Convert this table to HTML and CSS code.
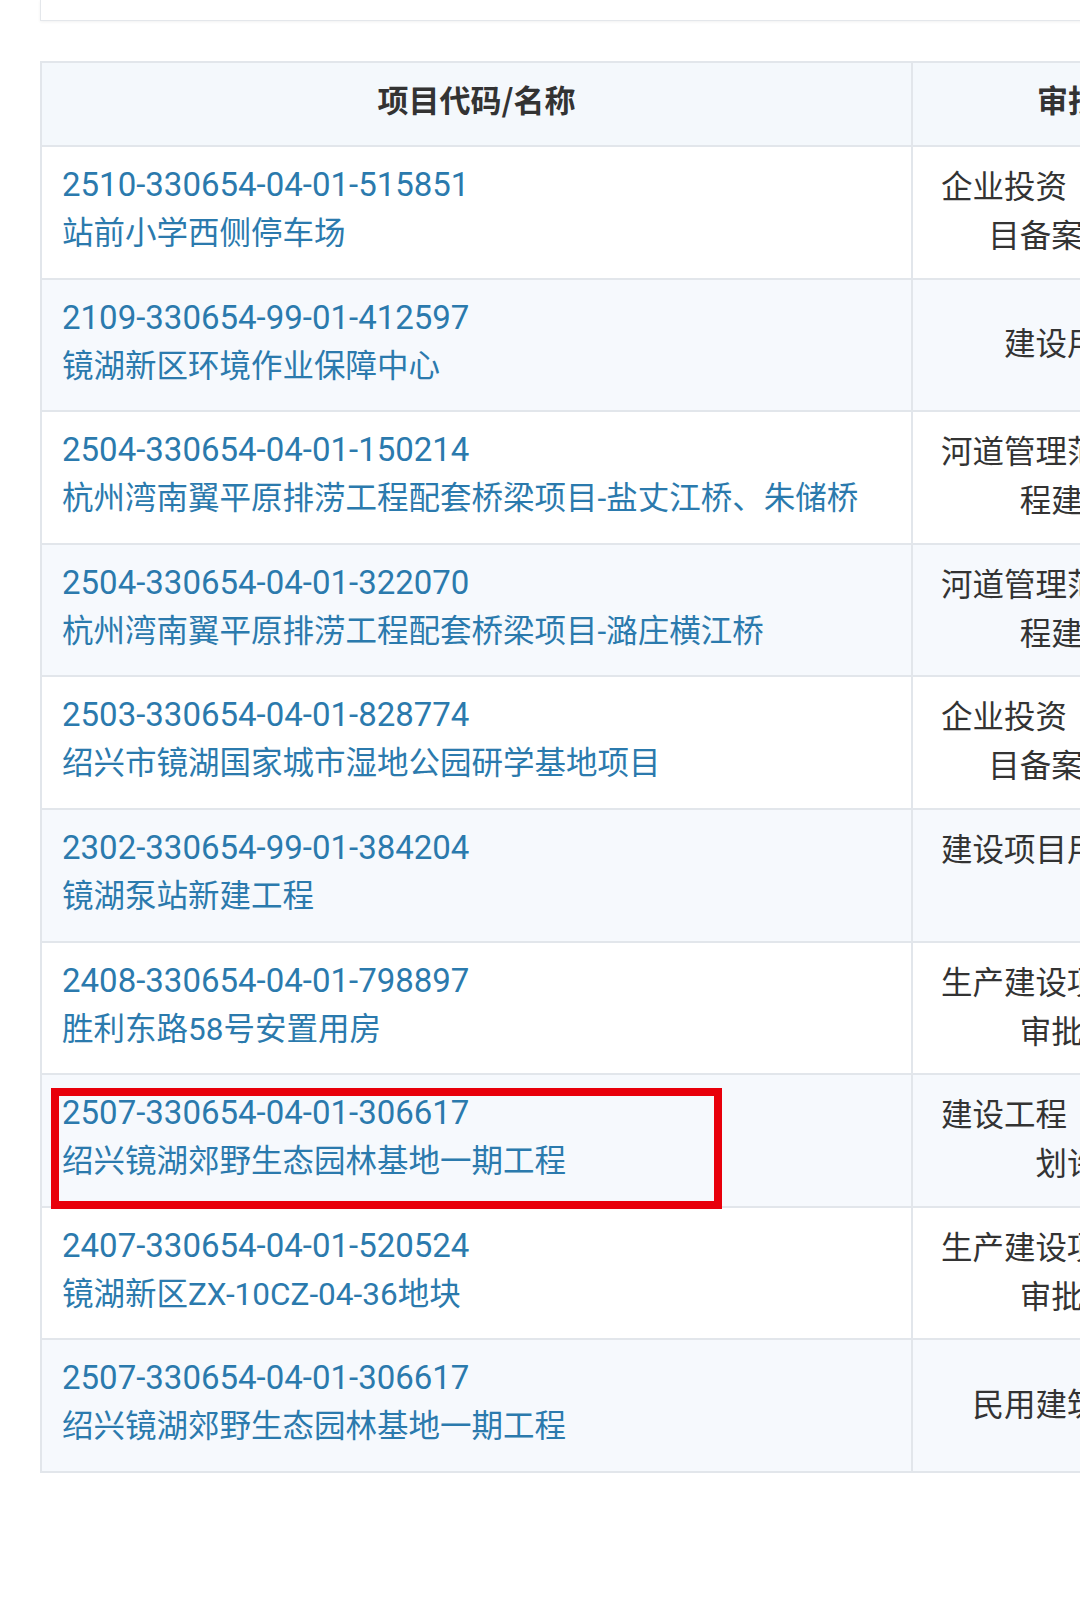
FILE: index.html
```html
<!DOCTYPE html>
<html lang="zh-CN">
<head>
    <meta charset="UTF-8">
    <meta name="viewport" content="width=device-width, initial-scale=1.0">
    <title>项目审批查询</title>
    <link rel="stylesheet" href="styles.css">
</head>
<body>

<div class="page">
    <div class="summary-card"></div>

    <div class="table-wrap">
        <table class="project-table">
            <colgroup>
                <col class="col-name">
                <col class="col-item">
            </colgroup>
            <thead>
                <tr>
                    <th>项目代码/名称</th>
                    <th>审批事项名称</th>
                </tr>
            </thead>
            <tbody>
                <tr>
                    <td class="project">
                        <a class="code" href="#">2510-330654-04-01-515851</a>
                        <a class="name" href="#">站前小学西侧停车场</a>
                    </td>
                    <td class="item">企业投资（含外商投资）项目备案（赋码）登记</td>
                </tr>
                <tr>
                    <td class="project">
                        <a class="code" href="#">2109-330654-99-01-412597</a>
                        <a class="name" href="#">镜湖新区环境作业保障中心</a>
                    </td>
                    <td class="item">建设用地规划许可</td>
                </tr>
                <tr>
                    <td class="project">
                        <a class="code" href="#">2504-330654-04-01-150214</a>
                        <a class="name" href="#">杭州湾南翼平原排涝工程配套桥梁项目-盐丈江桥、朱储桥</a>
                    </td>
                    <td class="item">河道管理范围内建设项目工程建设方案审批</td>
                </tr>
                <tr>
                    <td class="project">
                        <a class="code" href="#">2504-330654-04-01-322070</a>
                        <a class="name" href="#">杭州湾南翼平原排涝工程配套桥梁项目-潞庄横江桥</a>
                    </td>
                    <td class="item">河道管理范围内建设项目工程建设方案审批</td>
                </tr>
                <tr>
                    <td class="project">
                        <a class="code" href="#">2503-330654-04-01-828774</a>
                        <a class="name" href="#">绍兴市镜湖国家城市湿地公园研学基地项目</a>
                    </td>
                    <td class="item">企业投资（含外商投资）项目备案（赋码）登记</td>
                </tr>
                <tr>
                    <td class="project">
                        <a class="code" href="#">2302-330654-99-01-384204</a>
                        <a class="name" href="#">镜湖泵站新建工程</a>
                    </td>
                    <td class="item">建设项目用地预审与选址意见书</td>
                </tr>
                <tr>
                    <td class="project">
                        <a class="code" href="#">2408-330654-04-01-798897</a>
                        <a class="name" href="#">胜利东路58号安置用房</a>
                    </td>
                    <td class="item">生产建设项目水土保持方案审批（含变更）</td>
                </tr>
                <tr>
                    <td class="project marked">
                        <a class="code" href="#">2507-330654-04-01-306617</a>
                        <a class="name" href="#">绍兴镜湖郊野生态园林基地一期工程</a>
                        <span class="mark"></span>
                    </td>
                    <td class="item">建设工程（含临时建设）规划许可证核发</td>
                </tr>
                <tr>
                    <td class="project">
                        <a class="code" href="#">2407-330654-04-01-520524</a>
                        <a class="name" href="#">镜湖新区ZX-10CZ-04-36地块</a>
                    </td>
                    <td class="item">生产建设项目水土保持方案审批（含变更）</td>
                </tr>
                <tr>
                    <td class="project">
                        <a class="code" href="#">2507-330654-04-01-306617</a>
                        <a class="name" href="#">绍兴镜湖郊野生态园林基地一期工程</a>
                    </td>
                    <td class="item">民用建筑节能审查备案</td>
                </tr>
            </tbody>
        </table>
    </div>
</div>

</body>
</html>
```

FILE: styles.css
```css
body {
    margin: 0;
    font-family: Roboto, "Noto Sans CJK SC", sans-serif;
    background: #fff;
}
.page {
    padding-left: 40px;
    overflow: hidden;
}
.summary-card {
    width: 1200px;
    height: 20px;
    border: 1px solid #e4e7eb;
    border-top: none;
    box-shadow: 0 1px 3px rgba(0, 0, 0, 0.06);
}
.table-wrap {
    margin-top: 40px;
}
.project-table {
    border-collapse: collapse;
    table-layout: fixed;
    width: 1315px;
}
.col-name {
    width: 871px;
}
.col-item {
    width: 444px;
}
.project-table th,
.project-table td {
    border: 2px solid #e2e6eb;
}
.project-table th {
    padding: 15px 33px 26px 25px;
    background: #f4f8fc;
    color: #333;
    font-family: "Noto Sans CJK SC", sans-serif;
    font-size: 31px;
    font-weight: 700;
    line-height: 41px;
    text-align: center;
}
.project-table th:first-child {
    padding-left: 29px;
    padding-right: 29px;
}
.project-table td {
    padding: 13px 20px 19.6px;
    vertical-align: middle;
}
.project-table tbody tr:nth-child(even) td {
    background: #f6f9fd;
}
.project a {
    display: block;
    color: #2b7aad;
    text-decoration: none;
    line-height: 49px;
    white-space: nowrap;
}
.code {
    font-size: 33px;
}
.name {
    font-size: 31.5px;
}
.project-table td.item {
    padding-left: 25px;
    padding-right: 33px;
    color: #333;
    font-family: "Noto Sans CJK SC", sans-serif;
    font-size: 31.5px;
    line-height: 49px;
    text-align: center;
}
.marked {
    position: relative;
}
.mark {
    position: absolute;
    left: 9px;
    top: 13px;
    width: 671px;
    height: 121px;
    box-sizing: border-box;
    border: 8px solid #e8000b;
}
```
